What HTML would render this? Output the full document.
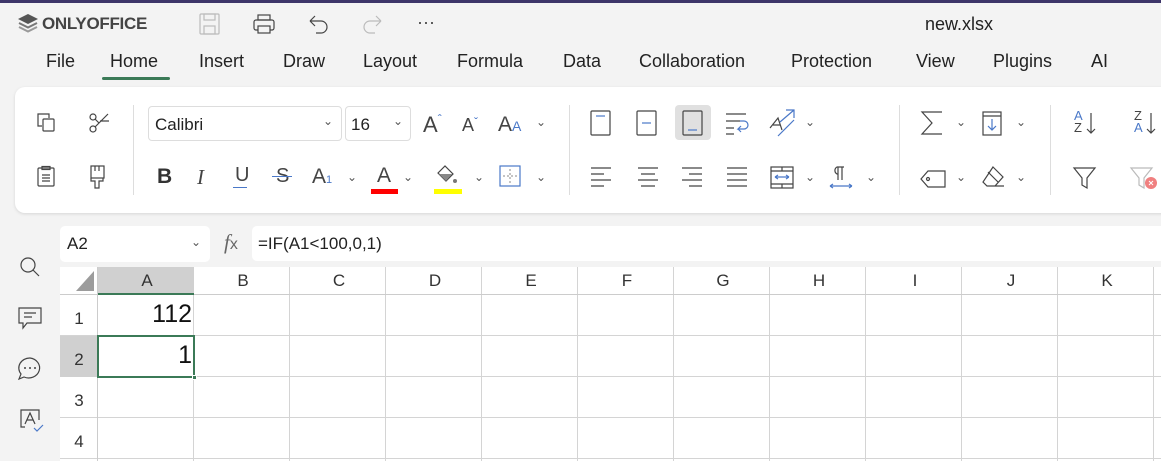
<!DOCTYPE html>
<html><head><meta charset="utf-8"><style>
*{box-sizing:border-box;margin:0;padding:0}
body{width:1161px;height:461px;overflow:hidden;background:#f3f3f3;font-family:"Liberation Sans",sans-serif;color:#333;position:relative}
.a{position:absolute}
.tab{position:absolute;top:51px;font-size:18px;color:#222}
svg{position:absolute;overflow:visible}
.s{fill:none;stroke:#444;stroke-width:1.2}
.b{fill:none;stroke:#4a78c8;stroke-width:1.2}
.ch{position:absolute;font-size:17px;color:#333;text-align:center;width:96px;top:271px}
.rh{position:absolute;left:60px;width:38px;text-align:center;font-size:17px;color:#333}
</style></head><body>
<div class="a" style="left:0;top:0;width:1161px;height:3px;background:#3d3569"></div>
<svg style="left:17px;top:13px" width="22" height="22" viewBox="0 0 22 22"><path d="M11 1L21 6 11 11 1 6Z" fill="#555"/><path d="M2 10l9 4.5 9-4.5" stroke="#777" stroke-width="2" fill="none"/><path d="M2 14l9 4.5 9-4.5" stroke="#999" stroke-width="2" fill="none"/></svg>
<div class="a" style="left:42px;top:14px;font-size:17px;font-weight:bold;color:#444;letter-spacing:-0.3px">ONLYOFFICE</div>
<svg style="left:199px;top:13px" width="22" height="22"><rect x="1" y="1" width="19" height="20" rx="1" class="s" style="stroke:#bbb"/><rect x="5" y="1" width="11" height="6" class="s" style="stroke:#bbb"/><rect x="5" y="13" width="11" height="8" class="s" style="stroke:#bbb"/></svg>
<svg style="left:253px;top:14px" width="22" height="20"><rect x="5" y="1" width="12" height="5" class="s"/><rect x="1" y="6" width="20" height="10" rx="2" class="s"/><rect x="5" y="12" width="12" height="7" class="s" style="fill:#f3f3f3"/></svg>
<svg style="left:308px;top:14px" width="22" height="22"><path d="M2 7h11a6 6 0 0 1 0 12H8M2 7l5-5M2 7l5 5" class="s"/></svg>
<svg style="left:361px;top:14px" width="22" height="22"><path d="M20 7H9a6 6 0 0 0 0 12h5M20 7l-5-5M20 7l-5 5" class="s" style="stroke:#bbb"/></svg>
<div class="a" style="left:417px;top:12px;font-size:18px;color:#444">···</div>
<div class="a" style="left:925px;top:14px;font-size:18px;color:#222">new.xlsx</div>
<div class="tab" style="left:46px">File</div>
<div class="tab" style="left:110px">Home</div>
<div class="a" style="left:102px;top:77px;width:68px;height:3px;border-radius:2px;background:#3b7a57"></div>
<div class="tab" style="left:199px">Insert</div>
<div class="tab" style="left:283px">Draw</div>
<div class="tab" style="left:363px">Layout</div>
<div class="tab" style="left:457px">Formula</div>
<div class="tab" style="left:563px">Data</div>
<div class="tab" style="left:639px">Collaboration</div>
<div class="tab" style="left:791px">Protection</div>
<div class="tab" style="left:916px">View</div>
<div class="tab" style="left:993px">Plugins</div>
<div class="tab" style="left:1091px">AI</div>
<div class="a" style="left:15px;top:87px;width:1170px;height:126px;background:#fff;border-radius:10px;box-shadow:0 1px 3px rgba(0,0,0,.12)"></div>
<div class="a" style="left:133px;top:105px;width:1px;height:90px;background:#ddd"></div>
<div class="a" style="left:569px;top:105px;width:1px;height:90px;background:#ddd"></div>
<div class="a" style="left:899px;top:105px;width:1px;height:90px;background:#ddd"></div>
<div class="a" style="left:1050px;top:105px;width:1px;height:90px;background:#ddd"></div>
<svg style="left:36px;top:112px" width="22" height="22"><path d="M6 14H2V2h11v4" class="s"/><rect x="7" y="7" width="11" height="12" rx="1" class="s"/></svg>
<svg style="left:87px;top:112px" width="24" height="22"><circle cx="6" cy="5" r="3" class="s"/><circle cx="6" cy="17" r="3" class="s"/><path d="M8 15L21 2M8 7l4 4M13 9h9" class="s"/></svg>
<svg style="left:37px;top:166px" width="20" height="22"><rect x="1" y="2" width="16" height="18" rx="1" class="s"/><rect x="5" y="0.5" width="8" height="3" class="s"/><path d="M5 9h8M5 12h8M5 15h8" class="s"/></svg>
<svg style="left:90px;top:165px" width="16" height="24"><rect x="1" y="1" width="13" height="12" class="s"/><path d="M5 1v5M9 1v5M1 13v3h4v7h4v-7h4v-3" class="s"/></svg>
<div class="a" style="left:148px;top:106px;width:194px;height:35px;border:1px solid #ddd;border-radius:4px"></div>
<div class="a" style="left:155px;top:115px;font-size:17px;color:#222">Calibri</div>
<div class="a" style="left:323px;top:114px;font-size:12px;color:#555">⌄</div>
<div class="a" style="left:345px;top:106px;width:66px;height:35px;border:1px solid #ddd;border-radius:4px"></div>
<div class="a" style="left:351px;top:115px;font-size:17px;color:#222">16</div>
<div class="a" style="left:393px;top:114px;font-size:12px;color:#555">⌄</div>
<div class="a" style="left:423px;top:112px;font-size:22px;color:#444;font-weight:300">A<span style="font-size:12px;color:#4a78c8;vertical-align:top">ˆ</span></div>
<div class="a" style="left:462px;top:115px;font-size:18px;color:#444">A<span style="font-size:12px;color:#4a78c8;vertical-align:top">ˇ</span></div>
<div class="a" style="left:498px;top:113px;font-size:21px;color:#444">A<span style="font-size:14px;color:#4a78c8">A</span></div>
<div class="a" style="left:536px;top:115px;font-size:12px;color:#555">⌄</div>
<div class="a" style="left:157px;top:165px;font-size:21px;font-weight:bold;color:#333">B</div>
<div class="a" style="left:197px;top:165px;font-size:21px;font-style:italic;color:#444;font-family:'Liberation Serif',serif">I</div>
<div class="a" style="left:235px;top:164px;font-size:20px;color:#444">U</div><div class="a" style="left:233px;top:187px;width:14px;height:1px;background:#4a78c8"></div>
<div class="a" style="left:276px;top:165px;font-size:20px;color:#444">S</div><div class="a" style="left:272px;top:176px;width:20px;height:1px;background:#4a78c8"></div>
<div class="a" style="left:312px;top:165px;font-size:21px;color:#444">A<span style="font-size:11px;color:#4a78c8">1</span></div>
<div class="a" style="left:347px;top:170px;font-size:12px;color:#555">⌄</div>
<div class="a" style="left:377px;top:164px;font-size:21px;color:#444">A</div><div class="a" style="left:371px;top:189px;width:27px;height:5px;background:#f00"></div>
<div class="a" style="left:403px;top:170px;font-size:12px;color:#555">⌄</div>
<svg style="left:435px;top:164px" width="24" height="22"><path d="M3 9l7-7 8 8-7 7z" class="s"/><path d="M4 10h13l-6 7z" fill="#888"/><circle cx="20" cy="17" r="2" fill="#777"/></svg>
<div class="a" style="left:434px;top:189px;width:28px;height:5px;background:#ff0"></div>
<div class="a" style="left:474px;top:170px;font-size:12px;color:#555">⌄</div>
<svg style="left:499px;top:165px" width="22" height="22"><rect x="1" y="1" width="20" height="20" class="b"/><path d="M11 4v14M4 11h14" stroke="#888" stroke-dasharray="2 2"/></svg>
<div class="a" style="left:536px;top:170px;font-size:12px;color:#555">⌄</div>
<svg style="left:590px;top:110px" width="22" height="26"><rect x="1" y="1" width="19" height="24" rx="1" class="s"/><path d="M6 6h9" class="b"/></svg>
<svg style="left:636px;top:110px" width="22" height="26"><rect x="1" y="1" width="19" height="24" rx="1" class="s"/><path d="M6 13h9" class="b"/></svg>
<div class="a" style="left:675px;top:105px;width:36px;height:35px;background:#e0e0e0;border-radius:4px"></div>
<svg style="left:682px;top:110px" width="22" height="26"><rect x="1" y="1" width="19" height="24" rx="1" class="s"/><path d="M6 20h9" class="b"/></svg>
<svg style="left:725px;top:112px" width="26" height="24"><path d="M1 2h20M1 9h14M1 16h8M1 22h8" class="s"/><path d="M15 9h4a4 4 0 0 1 0 8h-6l3-3M13 17l3 3" class="b"/></svg>
<svg style="left:768px;top:110px" width="30" height="28"><path d="M2 18l8-10 4 12M5 15h7" class="s"/><path d="M12 12l14-12M18 0h8v8M10 26l16-16" class="b"/></svg>
<div class="a" style="left:805px;top:115px;font-size:12px;color:#555">⌄</div>
<svg style="left:590px;top:167px" width="22" height="20"><path d="M1 1h20M1 7h13M1 13h20M1 19h13" class="s"/></svg>
<svg style="left:637px;top:167px" width="22" height="20"><path d="M1 1h20M4 7h14M1 13h20M4 19h14" class="s"/></svg>
<svg style="left:681px;top:167px" width="22" height="20"><path d="M1 1h20M8 7h13M1 13h20M8 19h13" class="s"/></svg>
<svg style="left:726px;top:167px" width="22" height="20"><path d="M1 1h20M1 7h20M1 13h20M1 19h20" class="s"/></svg>
<svg style="left:770px;top:166px" width="24" height="23"><rect x="1" y="1" width="22" height="21" class="s"/><path d="M1 5h22M1 18h22M12 1v4M12 18v4" class="s"/><path d="M5 11h14M5 11l3-2M5 11l3 2M19 11l-3-2M19 11l-3 2" class="b"/></svg>
<div class="a" style="left:805px;top:170px;font-size:12px;color:#555">⌄</div>
<svg style="left:828px;top:166px" width="26" height="24"><path d="M10 14V1M14 14V1M16 1H9a4 4 0 0 0 0 7h1" class="s"/><path d="M2 20h22M2 20l3-2M2 20l3 2M24 20l-3-2M24 20l-3 2" class="b"/></svg>
<div class="a" style="left:866px;top:170px;font-size:12px;color:#555">⌄</div>
<svg style="left:920px;top:111px" width="24" height="24"><path d="M22 1H2l10 11L2 23h20" class="s"/></svg>
<div class="a" style="left:956px;top:115px;font-size:12px;color:#555">⌄</div>
<svg style="left:982px;top:111px" width="20" height="25"><rect x="1" y="1" width="18" height="23" class="s"/><path d="M1 5h18" class="s"/><path d="M10 8v11M6 15l4 4 4-4" class="b"/></svg>
<div class="a" style="left:1016px;top:115px;font-size:12px;color:#555">⌄</div>
<svg style="left:920px;top:170px" width="26" height="18"><path d="M8 1h17v16H8L1 9z" class="s"/><circle cx="8" cy="9" r="1.5" class="s"/></svg>
<div class="a" style="left:956px;top:170px;font-size:12px;color:#555">⌄</div>
<svg style="left:982px;top:166px" width="22" height="22"><path d="M11 1l10 10-8 9H5L1 16z M6 6l10 10M5 20h17" class="s"/></svg>
<div class="a" style="left:1016px;top:170px;font-size:12px;color:#555">⌄</div>
<div class="a" style="left:1074px;top:110px;font-size:13px;line-height:12px;color:#4a78c8">A<br><span style="color:#444">Z</span></div>
<svg style="left:1086px;top:112px" width="10" height="24"><path d="M5 1v20M1 17l4 4 4-4" class="s"/></svg>
<div class="a" style="left:1134px;top:110px;font-size:13px;line-height:12px;color:#444">Z<br><span style="color:#4a78c8">A</span></div>
<svg style="left:1146px;top:112px" width="10" height="24"><path d="M5 1v20M1 17l4 4 4-4" class="s"/></svg>
<svg style="left:1073px;top:167px" width="24" height="22"><path d="M1 1h21l-8 10v10l-5-3v-7z" class="s"/></svg>
<svg style="left:1130px;top:167px" width="31" height="26"><path d="M1 1h21l-8 10v10l-5-3v-7z" class="s" style="stroke:#bbb"/><circle cx="21" cy="16" r="6" fill="#f08080"/><path d="M19 14l4 4M23 14l-4 4" stroke="#fff"/></svg>
<svg style="left:19px;top:256px" width="22" height="22"><circle cx="9" cy="9" r="7" class="s"/><path d="M14 14l6 6" class="s"/></svg>
<svg style="left:18px;top:307px" width="24" height="24"><path d="M1 1h22v15H9l-4 5v-5H1z" class="s"/><path d="M6 6h12M6 10h8" class="s"/></svg>
<svg style="left:18px;top:357px" width="24" height="24"><path d="M12 1a11 10 0 1 1-6 19l-5 2 2-5A11 10 0 0 1 12 1z" class="s"/><circle cx="7" cy="11" r="1" fill="#444"/><circle cx="12" cy="11" r="1" fill="#444"/><circle cx="17" cy="11" r="1" fill="#444"/></svg>
<svg style="left:20px;top:409px" width="24" height="24"><path d="M5 18H1V1h18v10" class="s"/><path d="M5 15l5-11 5 11M7 11h6" class="s"/><path d="M14 19l3 3 6-6" class="b"/></svg>
<div class="a" style="left:60px;top:226px;width:150px;height:36px;background:#fff;border-radius:5px"></div>
<div class="a" style="left:67px;top:234px;font-size:17px;color:#222">A2</div>
<div class="a" style="left:191px;top:235px;font-size:12px;color:#555">⌄</div>
<div class="a" style="left:224px;top:230px;font-size:21px;font-style:italic;color:#666;font-family:'Liberation Serif',serif">f<span style="font-style:normal;font-size:16px;font-family:'Liberation Sans'">x</span></div>
<div class="a" style="left:252px;top:226px;width:920px;height:35px;background:#fff;border-radius:5px"></div>
<div class="a" style="left:258px;top:234px;font-size:17px;color:#222">=IF(A1&lt;100,0,1)</div>
<div class="a" style="left:60px;top:267px;width:1101px;height:194px;background:#fff;
background-image:repeating-linear-gradient(90deg,transparent 0 95px,#d4d4d4 95px 96px),repeating-linear-gradient(180deg,transparent 0 40px,#d4d4d4 40px 41px);background-position:38px 28px;"></div>
<div class="a" style="left:60px;top:267px;width:1101px;height:28px;background:#fff;background-image:repeating-linear-gradient(90deg,transparent 0 95px,#d4d4d4 95px 96px);background-position:38px 0;border-bottom:1px solid #ccc"></div>
<div class="a" style="left:60px;top:267px;width:38px;height:194px;background:#fff;border-right:1px solid #ccc;background-image:repeating-linear-gradient(180deg,transparent 0 40px,#d4d4d4 40px 41px);background-position:0 28px"></div>
<div class="a" style="left:60px;top:267px;width:38px;height:28px;background:#fff;border-right:1px solid #ccc;border-bottom:1px solid #ccc"></div>
<svg style="left:75px;top:270px" width="20" height="22"><path d="M19 1v20H1z" fill="#9c9c9c"/></svg>
<div class="a" style="left:98px;top:267px;width:96px;height:28px;background:#d0d0d0;border-bottom:2px solid #3b7a57"></div>
<div class="a" style="left:60px;top:336px;width:38px;height:41px;background:#d0d0d0"></div>
<div class="ch" style="left:99px">A</div><div class="ch" style="left:195px">B</div><div class="ch" style="left:291px">C</div><div class="ch" style="left:387px">D</div><div class="ch" style="left:483px">E</div><div class="ch" style="left:579px">F</div><div class="ch" style="left:675px">G</div><div class="ch" style="left:771px">H</div><div class="ch" style="left:867px">I</div><div class="ch" style="left:963px">J</div><div class="ch" style="left:1059px">K</div>
<div class="rh" style="top:309px">1</div><div class="rh" style="top:350px">2</div><div class="rh" style="top:391px">3</div><div class="rh" style="top:432px">4</div>
<div class="a" style="left:98px;top:300px;width:94px;text-align:right;font-size:25px;color:#111">112</div>
<div class="a" style="left:97px;top:335px;width:98px;height:43px;border:2px solid #3b7a57"></div>
<div class="a" style="left:98px;top:341px;width:94px;text-align:right;font-size:25px;color:#111">1</div>
<div class="a" style="left:192px;top:375px;width:5px;height:5px;background:#3b7a57;border:1px solid #fff"></div>
</body></html>
